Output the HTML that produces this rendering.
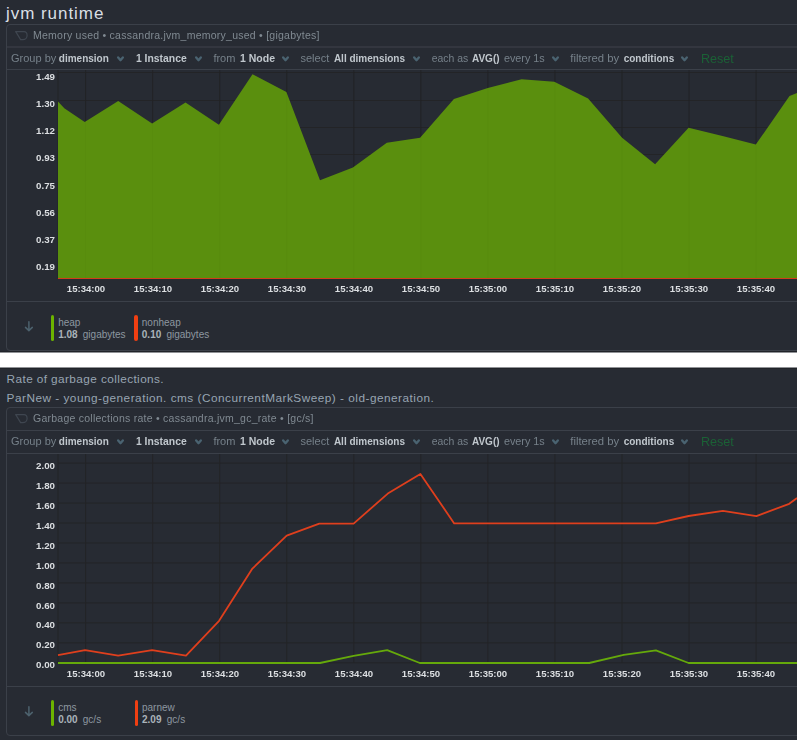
<!DOCTYPE html>
<html><head><meta charset="utf-8"><style>
html,body{margin:0;padding:0;}
body{width:797px;height:740px;overflow:hidden;background:#272b33;position:relative;font-family:"Liberation Sans", sans-serif;}
.t{position:absolute;white-space:nowrap;line-height:1;}
.r{position:absolute;white-space:nowrap;}
</style></head><body>
<svg style="position:absolute;left:0;top:0" width="797" height="740" viewBox="0 0 797 740"><line x1="58" y1="72.50" x2="797" y2="72.50" stroke="#232427" stroke-width="1"/><line x1="58" y1="100.50" x2="797" y2="100.50" stroke="#232427" stroke-width="1"/><line x1="58" y1="127.50" x2="797" y2="127.50" stroke="#232427" stroke-width="1"/><line x1="58" y1="154.50" x2="797" y2="154.50" stroke="#232427" stroke-width="1"/><line x1="58" y1="182.50" x2="797" y2="182.50" stroke="#232427" stroke-width="1"/><line x1="58" y1="209.50" x2="797" y2="209.50" stroke="#232427" stroke-width="1"/><line x1="58" y1="236.50" x2="797" y2="236.50" stroke="#232427" stroke-width="1"/><line x1="58" y1="264.50" x2="797" y2="264.50" stroke="#232427" stroke-width="1"/><line x1="58.00" y1="70" x2="58.00" y2="278" stroke="#232427" stroke-width="1"/><line x1="85.60" y1="70" x2="85.60" y2="278" stroke="#232427" stroke-width="1"/><line x1="152.65" y1="70" x2="152.65" y2="278" stroke="#232427" stroke-width="1"/><line x1="219.70" y1="70" x2="219.70" y2="278" stroke="#232427" stroke-width="1"/><line x1="286.75" y1="70" x2="286.75" y2="278" stroke="#232427" stroke-width="1"/><line x1="353.80" y1="70" x2="353.80" y2="278" stroke="#232427" stroke-width="1"/><line x1="420.85" y1="70" x2="420.85" y2="278" stroke="#232427" stroke-width="1"/><line x1="487.90" y1="70" x2="487.90" y2="278" stroke="#232427" stroke-width="1"/><line x1="554.95" y1="70" x2="554.95" y2="278" stroke="#232427" stroke-width="1"/><line x1="622.00" y1="70" x2="622.00" y2="278" stroke="#232427" stroke-width="1"/><line x1="689.05" y1="70" x2="689.05" y2="278" stroke="#232427" stroke-width="1"/><line x1="756.10" y1="70" x2="756.10" y2="278" stroke="#232427" stroke-width="1"/><polygon points="58,101.6 64.3,108.2 84.7,122.1 118.2,100.9 152.1,123.5 185.5,102.6 218.9,124.7 252.5,74.2 286.4,92.1 320,180.2 352.9,167.4 386.8,142.8 420.1,137.8 453.9,98.9 487.8,88.1 521.6,79.3 554.3,81.8 588.1,98.4 622.1,137.8 655.1,164.3 688.6,127.7 722.5,136 755.8,144.6 789.5,96 797,92.9 797,278 58,278" fill="#5a8f0e"/><line x1="85.60" y1="72" x2="85.60" y2="278" stroke="#000" stroke-opacity="0.025" stroke-width="1"/><line x1="152.65" y1="72" x2="152.65" y2="278" stroke="#000" stroke-opacity="0.025" stroke-width="1"/><line x1="219.70" y1="72" x2="219.70" y2="278" stroke="#000" stroke-opacity="0.025" stroke-width="1"/><line x1="286.75" y1="72" x2="286.75" y2="278" stroke="#000" stroke-opacity="0.025" stroke-width="1"/><line x1="353.80" y1="72" x2="353.80" y2="278" stroke="#000" stroke-opacity="0.025" stroke-width="1"/><line x1="420.85" y1="72" x2="420.85" y2="278" stroke="#000" stroke-opacity="0.025" stroke-width="1"/><line x1="487.90" y1="72" x2="487.90" y2="278" stroke="#000" stroke-opacity="0.025" stroke-width="1"/><line x1="554.95" y1="72" x2="554.95" y2="278" stroke="#000" stroke-opacity="0.025" stroke-width="1"/><line x1="622.00" y1="72" x2="622.00" y2="278" stroke="#000" stroke-opacity="0.025" stroke-width="1"/><line x1="689.05" y1="72" x2="689.05" y2="278" stroke="#000" stroke-opacity="0.025" stroke-width="1"/><line x1="756.10" y1="72" x2="756.10" y2="278" stroke="#000" stroke-opacity="0.025" stroke-width="1"/><line x1="58" y1="278.5" x2="797" y2="278.5" stroke="#d23c1b" stroke-width="1.1"/><line x1="58" y1="463.10" x2="797" y2="463.10" stroke="#232427" stroke-width="1"/><line x1="58" y1="483.07" x2="797" y2="483.07" stroke="#232427" stroke-width="1"/><line x1="58" y1="503.04" x2="797" y2="503.04" stroke="#232427" stroke-width="1"/><line x1="58" y1="523.01" x2="797" y2="523.01" stroke="#232427" stroke-width="1"/><line x1="58" y1="542.98" x2="797" y2="542.98" stroke="#232427" stroke-width="1"/><line x1="58" y1="562.95" x2="797" y2="562.95" stroke="#232427" stroke-width="1"/><line x1="58" y1="582.92" x2="797" y2="582.92" stroke="#232427" stroke-width="1"/><line x1="58" y1="602.89" x2="797" y2="602.89" stroke="#232427" stroke-width="1"/><line x1="58" y1="622.86" x2="797" y2="622.86" stroke="#232427" stroke-width="1"/><line x1="58" y1="642.83" x2="797" y2="642.83" stroke="#232427" stroke-width="1"/><line x1="58" y1="662.80" x2="797" y2="662.80" stroke="#232427" stroke-width="1"/><line x1="58.00" y1="454" x2="58.00" y2="663" stroke="#232427" stroke-width="1"/><line x1="85.60" y1="454" x2="85.60" y2="663" stroke="#232427" stroke-width="1"/><line x1="152.65" y1="454" x2="152.65" y2="663" stroke="#232427" stroke-width="1"/><line x1="219.70" y1="454" x2="219.70" y2="663" stroke="#232427" stroke-width="1"/><line x1="286.75" y1="454" x2="286.75" y2="663" stroke="#232427" stroke-width="1"/><line x1="353.80" y1="454" x2="353.80" y2="663" stroke="#232427" stroke-width="1"/><line x1="420.85" y1="454" x2="420.85" y2="663" stroke="#232427" stroke-width="1"/><line x1="487.90" y1="454" x2="487.90" y2="663" stroke="#232427" stroke-width="1"/><line x1="554.95" y1="454" x2="554.95" y2="663" stroke="#232427" stroke-width="1"/><line x1="622.00" y1="454" x2="622.00" y2="663" stroke="#232427" stroke-width="1"/><line x1="689.05" y1="454" x2="689.05" y2="663" stroke="#232427" stroke-width="1"/><line x1="756.10" y1="454" x2="756.10" y2="663" stroke="#232427" stroke-width="1"/><polyline points="58,663 320,663 353.6,655.8 387.2,650.2 419.8,663 589.2,663 623.7,654.8 655.9,650.4 688.6,663 797,663" fill="none" stroke="#65a90b" stroke-width="1.8" stroke-linejoin="round"/><polyline points="58,655.1 85.1,650.1 118.2,655.6 152.1,650.1 186,655.6 219.1,620.8 252.4,568.6 286.7,535.7 319.3,523.6 353.6,523.6 387.8,493.6 420.4,473.9 454.2,523.4 655.9,523.4 688.6,516 722.9,510.9 756.4,516.1 789.2,503.8 797,498.1" fill="none" stroke="#df3f1d" stroke-width="1.8" stroke-linejoin="round"/></svg>
<div class="t" style="left:6px;top:5.31px;font-size:17px;color:#d9dfe4;font-weight:normal;letter-spacing:0.95px">jvm runtime</div><div style="position:absolute;left:6px;top:24px;width:820px;height:325px;border:1px solid #3b4049;border-radius:4px;box-sizing:content-box"></div><div style="position:absolute;left:7px;top:46px;width:800px;height:2px;background:#33363f"></div><div style="position:absolute;left:7px;top:69px;width:800px;height:1px;background:#3b4049"></div><div style="position:absolute;left:7px;top:301px;width:800px;height:1px;background:#3b4049"></div><svg style="position:absolute;left:14px;top:31px" width="16" height="11" viewBox="0 0 16 11"><path d="M1.7 0.6 L10 0.6 C12 0.6 13.1 2.4 13.1 4.5 C13.1 6.9 11.2 8.6 8.8 8.6 L6.6 8.6 Z" fill="none" stroke="#3f4650" stroke-width="1.2" stroke-linejoin="round"/></svg><div class="t" style="left:33px;top:30.11px;font-size:10.5px;color:#808a92;font-weight:normal;letter-spacing:0.25px;will-change:transform">Memory used • cassandra.jvm_memory_used • [gigabytes]</div><div class="r" style="left:11px;top:48.39px;line-height:20px;font-size:11px;will-change:transform"><span style="display:inline-block;width:47.80px;font-size:11px;color:#76818a;font-weight:normal;">Group by</span><span style="display:inline-block;width:77.10px;font-size:10px;color:#c0c7cd;font-weight:bold;">dimension</span><span style="display:inline-block;width:77.50px;font-size:10.4px;color:#c0c7cd;font-weight:bold;">1 Instance</span><span style="display:inline-block;width:26.60px;font-size:11px;color:#76818a;font-weight:normal;">from</span><span style="display:inline-block;width:60.50px;font-size:10.5px;color:#c0c7cd;font-weight:bold;">1 Node</span><span style="display:inline-block;width:33.40px;font-size:11px;color:#76818a;font-weight:normal;">select</span><span style="display:inline-block;width:97.90px;font-size:10px;color:#c0c7cd;font-weight:bold;">All dimensions</span><span style="display:inline-block;width:40.20px;font-size:10.4px;color:#76818a;font-weight:normal;">each as</span><span style="display:inline-block;width:32.00px;font-size:10px;color:#c0c7cd;font-weight:bold;">AVG()</span><span style="display:inline-block;width:66.30px;font-size:10.8px;color:#76818a;font-weight:normal;">every 1s</span><span style="display:inline-block;width:53.40px;font-size:11.3px;color:#76818a;font-weight:normal;">filtered by</span><span style="display:inline-block;width:77.30px;font-size:10px;color:#c0c7cd;font-weight:bold;">conditions</span><span style="display:inline-block;font-size:12.6px;color:#1b6136;font-weight:normal;position:relative;top:1px">Reset</span></div><svg style="position:absolute;left:116.8px;top:55.7px" width="8" height="6" viewBox="0 0 8 6"><path d="M1.2 1.5 L3.5 4.2 L5.8 1.5" fill="none" stroke="#4a6371" stroke-width="2.3" stroke-linecap="round" stroke-linejoin="round"/></svg><svg style="position:absolute;left:194.8px;top:55.7px" width="8" height="6" viewBox="0 0 8 6"><path d="M1.2 1.5 L3.5 4.2 L5.8 1.5" fill="none" stroke="#4a6371" stroke-width="2.3" stroke-linecap="round" stroke-linejoin="round"/></svg><svg style="position:absolute;left:281.8px;top:55.7px" width="8" height="6" viewBox="0 0 8 6"><path d="M1.2 1.5 L3.5 4.2 L5.8 1.5" fill="none" stroke="#4a6371" stroke-width="2.3" stroke-linecap="round" stroke-linejoin="round"/></svg><svg style="position:absolute;left:412.8px;top:55.7px" width="8" height="6" viewBox="0 0 8 6"><path d="M1.2 1.5 L3.5 4.2 L5.8 1.5" fill="none" stroke="#4a6371" stroke-width="2.3" stroke-linecap="round" stroke-linejoin="round"/></svg><svg style="position:absolute;left:551.8px;top:55.7px" width="8" height="6" viewBox="0 0 8 6"><path d="M1.2 1.5 L3.5 4.2 L5.8 1.5" fill="none" stroke="#4a6371" stroke-width="2.3" stroke-linecap="round" stroke-linejoin="round"/></svg><svg style="position:absolute;left:680.8px;top:55.7px" width="8" height="6" viewBox="0 0 8 6"><path d="M1.2 1.5 L3.5 4.2 L5.8 1.5" fill="none" stroke="#4a6371" stroke-width="2.3" stroke-linecap="round" stroke-linejoin="round"/></svg><svg style="position:absolute;left:24px;top:319.40px" width="10" height="14" viewBox="0 0 10 14"><path d="M4.9 2.7 L4.9 11.3 M1.5 8.4 L4.9 11.6 L8.3 8.4" fill="none" stroke="#4d626e" stroke-width="1.5" stroke-linecap="round" stroke-linejoin="round"/></svg><div style="position:absolute;left:50.8px;top:315.3px;width:3.6px;height:25.6px;background:#6cb300;border-radius:2px"></div><div class="t" style="left:58.199999999999996px;top:318.04px;font-size:10px;color:#8d97a0;font-weight:normal;">heap</div><div class="t" style="left:58.199999999999996px;top:329.94px;font-size:10px;color:#aab3ba;font-weight:bold;">1.08</div><div class="t" style="left:82.8px;top:329.94px;font-size:10px;color:#8d97a0;font-weight:normal;">gigabytes</div><div style="position:absolute;left:134.4px;top:315.3px;width:3.6px;height:25.6px;background:#f03f12;border-radius:2px"></div><div class="t" style="left:141.8px;top:318.04px;font-size:10px;color:#8d97a0;font-weight:normal;">nonheap</div><div class="t" style="left:141.8px;top:329.94px;font-size:10px;color:#aab3ba;font-weight:bold;">0.10</div><div class="t" style="left:166.4px;top:329.94px;font-size:10px;color:#8d97a0;font-weight:normal;">gigabytes</div><div style="position:absolute;left:0px;top:351px;width:797px;height:1px;background:#202329"></div><div style="position:absolute;left:0px;top:352px;width:797px;height:1px;background:#909296"></div><div style="position:absolute;left:0px;top:353px;width:797px;height:14px;background:#ffffff"></div><div style="position:absolute;left:0px;top:367px;width:797px;height:1px;background:#909296"></div><div style="position:absolute;left:0px;top:368px;width:797px;height:1px;background:#202329"></div><div class="t" style="left:6.6px;top:374.21px;font-size:11.8px;color:#98a5b2;font-weight:normal;letter-spacing:0.4px">Rate of garbage collections.</div><div class="t" style="left:6.6px;top:392.61px;font-size:11.8px;color:#98a5b2;font-weight:normal;letter-spacing:0.49px">ParNew - young-generation. cms (ConcurrentMarkSweep) - old-generation.</div><div style="position:absolute;left:6px;top:407px;width:820px;height:327px;border:1px solid #3b4049;border-radius:4px;box-sizing:content-box"></div><div style="position:absolute;left:7px;top:430px;width:800px;height:1px;background:#3b4049"></div><div style="position:absolute;left:7px;top:453px;width:800px;height:1px;background:#3b4049"></div><div style="position:absolute;left:7px;top:686px;width:800px;height:1px;background:#3b4049"></div><svg style="position:absolute;left:14px;top:414px" width="16" height="11" viewBox="0 0 16 11"><path d="M1.7 0.6 L10 0.6 C12 0.6 13.1 2.4 13.1 4.5 C13.1 6.9 11.2 8.6 8.8 8.6 L6.6 8.6 Z" fill="none" stroke="#3f4650" stroke-width="1.2" stroke-linejoin="round"/></svg><div class="t" style="left:33px;top:413.11px;font-size:10.5px;color:#808a92;font-weight:normal;letter-spacing:0.25px;will-change:transform">Garbage collections rate • cassandra.jvm_gc_rate • [gc/s]</div><div class="r" style="left:11px;top:431.39px;line-height:20px;font-size:11px;will-change:transform"><span style="display:inline-block;width:47.80px;font-size:11px;color:#76818a;font-weight:normal;">Group by</span><span style="display:inline-block;width:77.10px;font-size:10px;color:#c0c7cd;font-weight:bold;">dimension</span><span style="display:inline-block;width:77.50px;font-size:10.4px;color:#c0c7cd;font-weight:bold;">1 Instance</span><span style="display:inline-block;width:26.60px;font-size:11px;color:#76818a;font-weight:normal;">from</span><span style="display:inline-block;width:60.50px;font-size:10.5px;color:#c0c7cd;font-weight:bold;">1 Node</span><span style="display:inline-block;width:33.40px;font-size:11px;color:#76818a;font-weight:normal;">select</span><span style="display:inline-block;width:97.90px;font-size:10px;color:#c0c7cd;font-weight:bold;">All dimensions</span><span style="display:inline-block;width:40.20px;font-size:10.4px;color:#76818a;font-weight:normal;">each as</span><span style="display:inline-block;width:32.00px;font-size:10px;color:#c0c7cd;font-weight:bold;">AVG()</span><span style="display:inline-block;width:66.30px;font-size:10.8px;color:#76818a;font-weight:normal;">every 1s</span><span style="display:inline-block;width:53.40px;font-size:11.3px;color:#76818a;font-weight:normal;">filtered by</span><span style="display:inline-block;width:77.30px;font-size:10px;color:#c0c7cd;font-weight:bold;">conditions</span><span style="display:inline-block;font-size:12.6px;color:#1b6136;font-weight:normal;position:relative;top:1px">Reset</span></div><svg style="position:absolute;left:116.8px;top:438.7px" width="8" height="6" viewBox="0 0 8 6"><path d="M1.2 1.5 L3.5 4.2 L5.8 1.5" fill="none" stroke="#4a6371" stroke-width="2.3" stroke-linecap="round" stroke-linejoin="round"/></svg><svg style="position:absolute;left:194.8px;top:438.7px" width="8" height="6" viewBox="0 0 8 6"><path d="M1.2 1.5 L3.5 4.2 L5.8 1.5" fill="none" stroke="#4a6371" stroke-width="2.3" stroke-linecap="round" stroke-linejoin="round"/></svg><svg style="position:absolute;left:281.8px;top:438.7px" width="8" height="6" viewBox="0 0 8 6"><path d="M1.2 1.5 L3.5 4.2 L5.8 1.5" fill="none" stroke="#4a6371" stroke-width="2.3" stroke-linecap="round" stroke-linejoin="round"/></svg><svg style="position:absolute;left:412.8px;top:438.7px" width="8" height="6" viewBox="0 0 8 6"><path d="M1.2 1.5 L3.5 4.2 L5.8 1.5" fill="none" stroke="#4a6371" stroke-width="2.3" stroke-linecap="round" stroke-linejoin="round"/></svg><svg style="position:absolute;left:551.8px;top:438.7px" width="8" height="6" viewBox="0 0 8 6"><path d="M1.2 1.5 L3.5 4.2 L5.8 1.5" fill="none" stroke="#4a6371" stroke-width="2.3" stroke-linecap="round" stroke-linejoin="round"/></svg><svg style="position:absolute;left:680.8px;top:438.7px" width="8" height="6" viewBox="0 0 8 6"><path d="M1.2 1.5 L3.5 4.2 L5.8 1.5" fill="none" stroke="#4a6371" stroke-width="2.3" stroke-linecap="round" stroke-linejoin="round"/></svg><svg style="position:absolute;left:24px;top:704.40px" width="10" height="14" viewBox="0 0 10 14"><path d="M4.9 2.7 L4.9 11.3 M1.5 8.4 L4.9 11.6 L8.3 8.4" fill="none" stroke="#4d626e" stroke-width="1.5" stroke-linecap="round" stroke-linejoin="round"/></svg><div style="position:absolute;left:50.8px;top:700.3000000000001px;width:3.6px;height:25.6px;background:#6cb300;border-radius:2px"></div><div class="t" style="left:58.199999999999996px;top:703.03px;font-size:10px;color:#8d97a0;font-weight:normal;">cms</div><div class="t" style="left:58.199999999999996px;top:714.93px;font-size:10px;color:#aab3ba;font-weight:bold;">0.00</div><div class="t" style="left:82.8px;top:714.93px;font-size:10px;color:#8d97a0;font-weight:normal;">gc/s</div><div style="position:absolute;left:134.6px;top:700.3000000000001px;width:3.6px;height:25.6px;background:#f03f12;border-radius:2px"></div><div class="t" style="left:142.0px;top:703.03px;font-size:10px;color:#8d97a0;font-weight:normal;">parnew</div><div class="t" style="left:142.0px;top:714.93px;font-size:10px;color:#aab3ba;font-weight:bold;">2.09</div><div class="t" style="left:166.8px;top:714.93px;font-size:10px;color:#8d97a0;font-weight:normal;">gc/s</div><div class="t" style="right:741.9px;top:71.55px;font-size:9.75px;color:#dcdfe2;font-weight:bold;text-align:right;will-change:transform;">1.49</div><div class="t" style="right:741.9px;top:98.82px;font-size:9.75px;color:#dcdfe2;font-weight:bold;text-align:right;will-change:transform;">1.30</div><div class="t" style="right:741.9px;top:126.09px;font-size:9.75px;color:#dcdfe2;font-weight:bold;text-align:right;will-change:transform;">1.12</div><div class="t" style="right:741.9px;top:153.36px;font-size:9.75px;color:#dcdfe2;font-weight:bold;text-align:right;will-change:transform;">0.93</div><div class="t" style="right:741.9px;top:180.63px;font-size:9.75px;color:#dcdfe2;font-weight:bold;text-align:right;will-change:transform;">0.75</div><div class="t" style="right:741.9px;top:207.90px;font-size:9.75px;color:#dcdfe2;font-weight:bold;text-align:right;will-change:transform;">0.56</div><div class="t" style="right:741.9px;top:235.17px;font-size:9.75px;color:#dcdfe2;font-weight:bold;text-align:right;will-change:transform;">0.37</div><div class="t" style="right:741.9px;top:262.44px;font-size:9.75px;color:#dcdfe2;font-weight:bold;text-align:right;will-change:transform;">0.19</div><div class="t" style="left:35.599999999999994px;width:100px;text-align:center;top:283.77px;font-size:9.6px;color:#dcdfe2;font-weight:bold;will-change:transform;">15:34:00</div><div class="t" style="left:102.64999999999998px;width:100px;text-align:center;top:283.77px;font-size:9.6px;color:#dcdfe2;font-weight:bold;will-change:transform;">15:34:10</div><div class="t" style="left:169.7px;width:100px;text-align:center;top:283.77px;font-size:9.6px;color:#dcdfe2;font-weight:bold;will-change:transform;">15:34:20</div><div class="t" style="left:236.75px;width:100px;text-align:center;top:283.77px;font-size:9.6px;color:#dcdfe2;font-weight:bold;will-change:transform;">15:34:30</div><div class="t" style="left:303.79999999999995px;width:100px;text-align:center;top:283.77px;font-size:9.6px;color:#dcdfe2;font-weight:bold;will-change:transform;">15:34:40</div><div class="t" style="left:370.85px;width:100px;text-align:center;top:283.77px;font-size:9.6px;color:#dcdfe2;font-weight:bold;will-change:transform;">15:34:50</div><div class="t" style="left:437.9px;width:100px;text-align:center;top:283.77px;font-size:9.6px;color:#dcdfe2;font-weight:bold;will-change:transform;">15:35:00</div><div class="t" style="left:504.94999999999993px;width:100px;text-align:center;top:283.77px;font-size:9.6px;color:#dcdfe2;font-weight:bold;will-change:transform;">15:35:10</div><div class="t" style="left:572.0px;width:100px;text-align:center;top:283.77px;font-size:9.6px;color:#dcdfe2;font-weight:bold;will-change:transform;">15:35:20</div><div class="t" style="left:639.05px;width:100px;text-align:center;top:283.77px;font-size:9.6px;color:#dcdfe2;font-weight:bold;will-change:transform;">15:35:30</div><div class="t" style="left:706.1px;width:100px;text-align:center;top:283.77px;font-size:9.6px;color:#dcdfe2;font-weight:bold;will-change:transform;">15:35:40</div><div class="t" style="right:741.9px;top:460.95px;font-size:9.75px;color:#dcdfe2;font-weight:bold;text-align:right;will-change:transform;">2.00</div><div class="t" style="right:741.9px;top:480.89px;font-size:9.75px;color:#dcdfe2;font-weight:bold;text-align:right;will-change:transform;">1.80</div><div class="t" style="right:741.9px;top:500.83px;font-size:9.75px;color:#dcdfe2;font-weight:bold;text-align:right;will-change:transform;">1.60</div><div class="t" style="right:741.9px;top:520.77px;font-size:9.75px;color:#dcdfe2;font-weight:bold;text-align:right;will-change:transform;">1.40</div><div class="t" style="right:741.9px;top:540.71px;font-size:9.75px;color:#dcdfe2;font-weight:bold;text-align:right;will-change:transform;">1.20</div><div class="t" style="right:741.9px;top:560.65px;font-size:9.75px;color:#dcdfe2;font-weight:bold;text-align:right;will-change:transform;">1.00</div><div class="t" style="right:741.9px;top:580.59px;font-size:9.75px;color:#dcdfe2;font-weight:bold;text-align:right;will-change:transform;">0.80</div><div class="t" style="right:741.9px;top:600.53px;font-size:9.75px;color:#dcdfe2;font-weight:bold;text-align:right;will-change:transform;">0.60</div><div class="t" style="right:741.9px;top:620.47px;font-size:9.75px;color:#dcdfe2;font-weight:bold;text-align:right;will-change:transform;">0.40</div><div class="t" style="right:741.9px;top:640.41px;font-size:9.75px;color:#dcdfe2;font-weight:bold;text-align:right;will-change:transform;">0.20</div><div class="t" style="right:741.9px;top:660.35px;font-size:9.75px;color:#dcdfe2;font-weight:bold;text-align:right;will-change:transform;">0.00</div><div class="t" style="left:35.599999999999994px;width:100px;text-align:center;top:668.87px;font-size:9.6px;color:#dcdfe2;font-weight:bold;will-change:transform;">15:34:00</div><div class="t" style="left:102.64999999999998px;width:100px;text-align:center;top:668.87px;font-size:9.6px;color:#dcdfe2;font-weight:bold;will-change:transform;">15:34:10</div><div class="t" style="left:169.7px;width:100px;text-align:center;top:668.87px;font-size:9.6px;color:#dcdfe2;font-weight:bold;will-change:transform;">15:34:20</div><div class="t" style="left:236.75px;width:100px;text-align:center;top:668.87px;font-size:9.6px;color:#dcdfe2;font-weight:bold;will-change:transform;">15:34:30</div><div class="t" style="left:303.79999999999995px;width:100px;text-align:center;top:668.87px;font-size:9.6px;color:#dcdfe2;font-weight:bold;will-change:transform;">15:34:40</div><div class="t" style="left:370.85px;width:100px;text-align:center;top:668.87px;font-size:9.6px;color:#dcdfe2;font-weight:bold;will-change:transform;">15:34:50</div><div class="t" style="left:437.9px;width:100px;text-align:center;top:668.87px;font-size:9.6px;color:#dcdfe2;font-weight:bold;will-change:transform;">15:35:00</div><div class="t" style="left:504.94999999999993px;width:100px;text-align:center;top:668.87px;font-size:9.6px;color:#dcdfe2;font-weight:bold;will-change:transform;">15:35:10</div><div class="t" style="left:572.0px;width:100px;text-align:center;top:668.87px;font-size:9.6px;color:#dcdfe2;font-weight:bold;will-change:transform;">15:35:20</div><div class="t" style="left:639.05px;width:100px;text-align:center;top:668.87px;font-size:9.6px;color:#dcdfe2;font-weight:bold;will-change:transform;">15:35:30</div><div class="t" style="left:706.1px;width:100px;text-align:center;top:668.87px;font-size:9.6px;color:#dcdfe2;font-weight:bold;will-change:transform;">15:35:40</div>
</body></html>
